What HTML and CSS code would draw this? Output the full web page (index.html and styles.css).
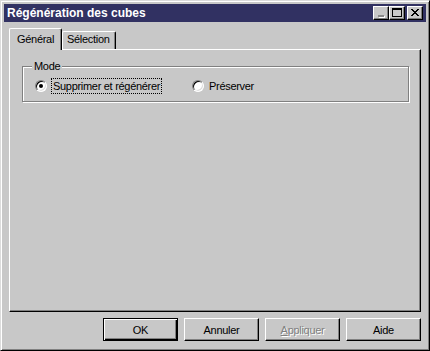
FILE: index.html
```html
<!DOCTYPE html>
<html lang="fr">
<head>
<meta charset="utf-8">
<title>Régénération des cubes</title>
<link rel="stylesheet" href="styles.css">
</head>
<body>
<div class="window">
  <div class="titlebar">
    <span class="title">Régénération des cubes</span>
    <div class="caption-btns">
      <span class="cbtn">
        <svg width="14" height="12" viewBox="0 0 14 12" shape-rendering="crispEdges"><rect x="4" y="8" width="6" height="2" fill="#8a8a8a"/><rect x="5" y="10" width="6" height="1" fill="#fff"/><rect x="10" y="9" width="1" height="2" fill="#fff"/></svg>
      </span>
      <span class="cbtn">
        <svg width="14" height="12" viewBox="0 0 14 12" shape-rendering="crispEdges"><rect x="2.5" y="1.5" width="9" height="8" fill="none" stroke="#000" stroke-width="1"/><rect x="2" y="1" width="10" height="2" fill="#000"/></svg>
      </span>
      <span class="cbtn close">
        <svg width="14" height="12" viewBox="0 0 14 12" shape-rendering="crispEdges"><path d="M3 2h2v1h1v1h2v-1h1v-1h2v1h-1v1h-1v1h-1v1h1v1h1v1h1v1h-2v-1h-1v-1h-2v1h-1v1h-2v-1h1v-1h1v-1h1v-1h-1v-1h-1v-1h-1z" fill="#000"/></svg>
      </span>
    </div>
  </div>
  <div class="content">
    <div class="tabs">
      <div class="tab active">Général</div>
      <div class="tab">Sélection</div>
    </div>
    <div class="panel">
      <div class="group">
        <span class="legend">Mode</span>
        <div class="options">
          <div class="opt"><span class="radio checked"></span><span class="label focus">Supprimer et régénérer</span></div>
          <div class="opt"><span class="radio"></span><span class="label">Préserver</span></div>
        </div>
      </div>
    </div>
    <div class="buttons">
      <button class="btn default">OK</button>
      <button class="btn">Annuler</button>
      <button class="btn disabled"><span class="u">A</span>ppliquer</button>
      <button class="btn">Aide</button>
    </div>
  </div>
</div>
</body>
</html>
```
FILE: styles.css
```css
html, body {
  margin: 0;
  padding: 0;
  background: #c8c8c8;
}
body {
  font-family: "Liberation Sans", Arial, sans-serif;
  font-size: 11px;
  letter-spacing: -0.3px;
  color: #000;
}
.window {
  width: 430px;
  height: 351px;
  box-sizing: border-box;
  background: #c8c8c8;
  border: 1px solid;
  border-color: #dcdcdc #000 #000 #dcdcdc;
  box-shadow: inset 1px 1px 0 #fff, inset -1px -1px 0 #808080;
  padding: 3px;
  display: flex;
  flex-direction: column;
}
.titlebar {
  height: 18px;
  background: #313162;
  color: #fff;
  display: flex;
  align-items: center;
  justify-content: space-between;
  padding: 0 3px 0 3px;
}
.title {
  font-weight: bold;
  font-size: 12px;
  line-height: 14px;
  letter-spacing: 0;
}
.caption-btns {
  display: flex;
  align-items: center;
}
.cbtn {
  width: 16px;
  height: 14px;
  box-sizing: border-box;
  background: #c8c8c8;
  border: 1px solid;
  border-color: #fff #000 #000 #fff;
  box-shadow: inset -1px -1px 0 #808080;
  display: flex;
  align-items: flex-start;
  justify-content: flex-start;
}
.cbtn svg { display: block; }
.cbtn.close { margin-left: 2px; }
.content {
  flex: 1;
  display: flex;
  flex-direction: column;
  padding: 6px 5px 6px 5px;
}
.tabs {
  display: flex;
  align-items: flex-end;
  height: 21px;
  position: relative;
  z-index: 2;
}
.tab {
  box-sizing: border-box;
  height: 18px;
  border-top: 1px solid #fff;
  border-left: 1px solid #fff;
  border-right: 1px solid #000;
  box-shadow: inset -1px 0 0 #808080;
  border-radius: 2px 2px 0 0;
  line-height: 13px;
  padding: 1px 0 0 4px;
  width: 54px;
  white-space: nowrap;
}
.tab.active {
  width: 53px;
  height: 22px;
  margin-bottom: -1px;
  padding: 4px 0 0 7px;
  background: #c8c8c8;
}
.panel {
  height: 263px;
  box-sizing: border-box;
  border: 1px solid;
  border-color: #fff #000 #000 #fff;
  box-shadow: inset -1px -1px 0 #808080;
  padding: 16px 12px 0 12px;
}
.group {
  position: relative;
  height: 36px;
  box-sizing: border-box;
  border: 1px solid #808080;
  box-shadow: inset 1px 1px 0 #fff, 1px 1px 0 #fff;
  margin-right: -1px;
  padding: 11px 0 0 12px;
}
.legend {
  position: absolute;
  top: -7px;
  left: 9px;
  padding: 0 2px;
  background: #c8c8c8;
  line-height: 13px;
}
.options {
  display: grid;
  grid-template-columns: 157px auto;
}
.opt {
  display: flex;
  align-items: center;
  height: 16px;
}
.radio {
  width: 12px;
  height: 12px;
  box-sizing: border-box;
  border-radius: 50%;
  background: #fff;
  border: 1px solid;
  border-color: #808080 #fff #fff #808080;
  box-shadow: inset 1px 1px 0 #000, inset -1px -1px 0 #dcdcdc;
  position: relative;
  flex: none;
}
.radio.checked::after {
  content: "";
  position: absolute;
  left: 3px;
  top: 3px;
  width: 4px;
  height: 4px;
  border-radius: 50%;
  background: #000;
}
.label {
  margin-left: 5px;
  line-height: 13px;
}
.label.focus {
  margin-left: 4px;
  border: 1px dotted #000;
  padding: 0 1px;
  line-height: 14px;
}
.buttons {
  margin-top: 6px;
  display: flex;
  justify-content: flex-end;
  gap: 6px;
}
.btn {
  width: 75px;
  height: 23px;
  box-sizing: border-box;
  background: #c8c8c8;
  border: 1px solid;
  border-color: #fff #000 #000 #fff;
  box-shadow: inset -1px -1px 0 #808080;
  font-family: "Liberation Sans", Arial, sans-serif;
  font-size: 11px;
  font-weight: normal;
  letter-spacing: -0.3px;
  color: #000;
  padding: 0;
  margin: 0;
}
.btn.default {
  border-color: #000;
  box-shadow: inset 1px 1px 0 #fff, inset -1px -1px 0 #000, inset -2px -2px 0 #808080;
}
.btn.disabled {
  color: #808080;
  text-shadow: 1px 1px 0 #fff;
}
.u { text-decoration: underline; }
```
